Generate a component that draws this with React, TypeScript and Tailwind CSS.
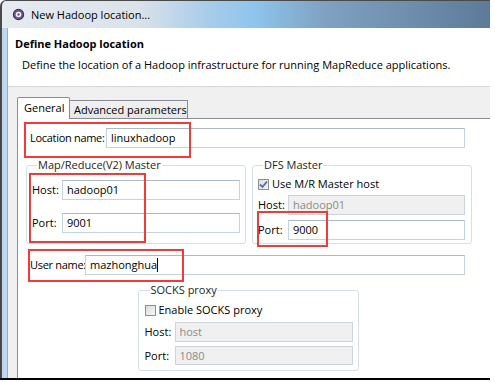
import React from 'react';

const font = "font-['Open_Sans','Noto_Sans',sans-serif]";

function TextBox(props: { value: string; width: string; disabled?: boolean; caret?: boolean; h?: string }) {
  return (
    <div
      className={`${props.width} ${props.h ?? 'h-[20px]'} shrink-0 flex items-center px-[4px] border ${
        props.disabled ? 'bg-[#f0f0f0] text-[#8b8b8b] border-[#cdd3da]' : 'bg-white text-black border-[#c3d3e3] border-t-[#abb9c7]'
      }`}
    >
      <span>{props.value}</span>
      {props.caret && <span className="w-px h-[14px] bg-black" />}
    </div>
  );
}

function Check(props: { checked?: boolean }) {
  return (
    <div className="w-[11px] h-[11px] shrink-0 border border-[#8e8f8f] bg-[linear-gradient(135deg,#dcdcdc,#f6f6f6)] flex items-center justify-center">
      {props.checked && (
        <svg width="9" height="9" viewBox="0 0 9 9">
          <path d="M1 4.5 L3.5 7 L8 1.5" stroke="#4a6fb5" strokeWidth="1.8" fill="none" />
        </svg>
      )}
    </div>
  );
}

function Row(props: { label: string; labelWidth: string; children: React.ReactNode; className?: string }) {
  return (
    <div className={`flex items-center ${props.className ?? ''}`}>
      <span className={`${props.labelWidth} shrink-0`}>{props.label}</span>
      {props.children}
    </div>
  );
}

function Group(props: { title: string; className?: string; children: React.ReactNode }) {
  return (
    <fieldset className={`border border-[#d5dfe5] rounded-[3px] ${props.className ?? ''}`}>
      <legend className="ml-[5px] px-[1px] leading-[16px] text-[#1e1e1e]">{props.title}</legend>
      {props.children}
    </fieldset>
  );
}

export default function App() {
  return (
    <div className={`relative w-[495px] h-[382px] bg-white overflow-hidden text-[11px] leading-[16px] text-black whitespace-nowrap ${font}`}>
      <div className="w-[490px] h-[380px] border-b-2 border-black flex flex-col">
        {/* title bar */}
        <div className="h-[28px] shrink-0 flex items-center pl-[10px] gap-[6px] border-l-2 border-t border-[#4a4a4a] rounded-tl-[6px] bg-[linear-gradient(to_right,#e6ebf0_0%,#dae2ea_28%,#a9cde9_42%,#8ec4ec_52%,#7fa2c2_66%,#5d7b99_100%)]">
          <svg width="13" height="13" viewBox="0 0 14 14">
            <circle cx="7" cy="7" r="5.5" fill="#6b5a8e" stroke="#3d3358" strokeWidth="1.2" />
            <circle cx="7" cy="7" r="3" fill="#f4f4f4" />
            <circle cx="7" cy="7" r="1.3" fill="#6b5a8e" />
          </svg>
          <span className="text-black">New Hadoop location...</span>
        </div>

        <div className="flex-1 flex min-h-0">
          <div className="w-[8px] shrink-0 bg-[#bfd8f0] border-l-2 border-[#474747] border-r border-r-[#8fb0d0]" />
          <div className="flex-1 flex flex-col min-w-0">
            {/* header */}
            <div className="h-[59px] shrink-0 bg-white border-b border-[#d6d6d6] pl-[7px] pt-[8px]">
              <div className="font-bold leading-[16px]">Define Hadoop location</div>
              <div className="pl-[7px] mt-[5px]">Define the location of a Hadoop infrastructure for running MapReduce applications.</div>
            </div>

            {/* body */}
            <div className="flex-1 bg-[#f0f0f0] pl-[9px] pt-[10px] flex flex-col min-h-0">
              <div className="flex items-end h-[22px] relative z-10 -mb-px">
                <div className="w-[53px] h-[22px] bg-white border border-b-0 border-[#898c95] rounded-t-[2px] pl-[6px] pt-[2px]">
                  General
                </div>
                <div className="w-[119px] h-[19px] -ml-px bg-[linear-gradient(#f2f2f2,#e6e6e6)] border border-[#898c95] pl-[4px] pt-[1px]">
                  Advanced parameters
                </div>
              </div>

              <div className="flex-1 bg-white border-t border-l border-[#898c95] pl-[8px] pt-[9px] flex flex-col">
                <Row label="Location name:" labelWidth="w-[80px] pl-[4px] tracking-[-0.3px]">
                  <TextBox value="linuxhadoop" width="w-[359px]" />
                </Row>

                <div className="flex gap-[6px] mt-[9px]">
                  <Group title="Map/Reduce(V2) Master" className="w-[220px] pl-[5px] pt-[7px] pb-[10px]">
                    <Row label="Host:" labelWidth="w-[30px]">
                      <TextBox value="hadoop01" width="w-[178px]" />
                    </Row>
                    <Row label="Port:" labelWidth="w-[30px]" className="mt-[13px]">
                      <TextBox value="9001" width="w-[178px]" />
                    </Row>
                  </Group>
                  <Group title="DFS Master" className="w-[220px] pl-[5px] pt-[3px] pb-[3px]">
                    <div className="flex items-center gap-[3px] h-[16px]">
                      <Check checked />
                      <span>Use M/R Master host</span>
                    </div>
                    <Row label="Host:" labelWidth="w-[30px]" className="mt-[3px]">
                      <TextBox value="hadoop01" width="w-[177px]" h="h-[20px]" disabled />
                    </Row>
                    <Row label="Port:" labelWidth="w-[30px]" className="mt-[5px]">
                      <TextBox value="9000" width="w-[177px]" h="h-[20px]" />
                    </Row>
                  </Group>
                </div>

                <Row label="User name:" labelWidth="w-[59px] pl-[4px] tracking-[-0.3px]" className="mt-[11px]">
                  <TextBox value="mazhonghua" width="w-[380px]" caret />
                </Row>

                <div className="flex justify-center pr-[20px] mt-[7px]">
                  <Group title="SOCKS proxy" className="w-[221px] pl-[6px] pt-[4px] pb-[5px]">
                    <div className="flex items-center gap-[3px] h-[16px]">
                      <Check />
                      <span>Enable SOCKS proxy</span>
                    </div>
                    <Row label="Host:" labelWidth="w-[30px]" className="mt-[4px]">
                      <TextBox value="host" width="w-[178px]" h="h-[20px]" disabled />
                    </Row>
                    <Row label="Port:" labelWidth="w-[30px]" className="mt-[4px]">
                      <TextBox value="1080" width="w-[178px]" h="h-[19px]" disabled />
                    </Row>
                  </Group>
                </div>
              </div>
            </div>
          </div>
        </div>
      </div>

      {/* red annotation boxes */}
      <div className="absolute left-[24px] top-[122px] w-[167px] h-[36px] border-2 border-[#f23a3a]" />
      <div className="absolute left-[29px] top-[173px] w-[117px] h-[70px] border-2 border-[#f23a3a]" />
      <div className="absolute left-[257px] top-[211px] w-[71px] h-[36px] border-2 border-[#f23a3a]" />
      <div className="absolute left-[28px] top-[249px] w-[156px] h-[33px] border-2 border-[#f23a3a]" />
    </div>
  );
}
